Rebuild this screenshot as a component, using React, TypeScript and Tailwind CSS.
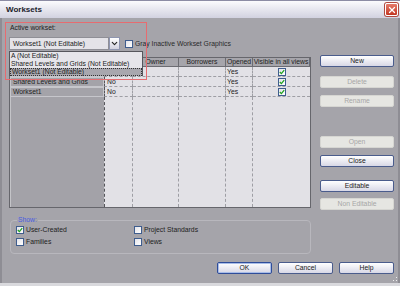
import { ChevronDown, X } from 'lucide-react';

const rows = [
  { name: '', editable: '', opened: 'Yes' },
  { name: 'Shared Levels and Grids', editable: 'No', opened: 'Yes' },
  { name: 'Workset1', editable: 'No', opened: 'Yes' },
];

const cols = 'grid grid-cols-[94px_29px_46px_47px_27px_57px]';

function Tick({ checked = false }: { checked?: boolean }) {
  return (
    <span className="w-[8px] h-[8px] bg-gradient-to-br from-[#e4e4ea] to-white border border-[#3f5d8e] flex items-center justify-center shrink-0">
      {checked && (
        <svg width="6" height="6" viewBox="0 0 6 6">
          <path d="M0.8 3 L2.4 4.6 L5.2 1.2" fill="none" stroke="#21a121" strokeWidth="1.3" />
        </svg>
      )}
    </span>
  );
}

function Btn({ label, disabled = false, primary = false }: { label: string; disabled?: boolean; primary?: boolean }) {
  return (
    <div
      className={
        disabled
          ? 'h-[12px] flex items-center justify-center rounded-[2px] bg-[#e6e6e2] border border-[#d6d6d2] text-[#a6a6a6]'
          : primary
            ? 'h-[12px] flex items-center justify-center rounded-[2px] bg-gradient-to-b from-white to-[#d8d8e6] border border-[#2f4d9a] shadow-[inset_0_0_0_1px_#a9bde8] text-[#1a1a1a]'
            : 'h-[12px] flex items-center justify-center rounded-[2px] bg-gradient-to-b from-white to-[#d8d8e6] border border-[#4a5c8c] text-[#1a1a1a]'
      }
    >
      {label}
    </div>
  );
}

export default function App() {
  return (
    <div className="w-[400px] h-[286px] bg-[#a5a4aa] flex flex-col overflow-hidden relative font-['Liberation_Sans',Arial,sans-serif] text-[6.8px] leading-[8px] text-[#222]">
      {/* Title bar */}
      <div className="h-[18px] shrink-0 flex items-center justify-between pl-[6px] pr-[2px] bg-gradient-to-b from-[#fbfbfd] to-[#d2d2e0] border-t border-[#8c8ca4]">
        <span className="font-bold text-[8px] text-[#1c1c2c]">Worksets</span>
        <div className="w-[13px] h-[13px] rounded-[2px] border border-white bg-gradient-to-b from-[#e67a6a] to-[#c23420] flex items-center justify-center shadow-[0_0_0_1px_#b04a40]">
          <X size={10} strokeWidth={3} className="text-white" />
        </div>
      </div>

      {/* Body */}
      <div className="flex-1 flex flex-col pl-[7px] pr-[4px] border-l-2 border-r-2 border-[#8e8d94]">
        <div className="mt-[6px] pl-[1px] text-[#202020]">Active workset:</div>

        <div className="mt-[5px] flex items-center h-[13px]">
          <div className="w-[100px] h-[13px] bg-[#e4e3e8] border border-[#8f8f96] flex items-center pl-[3px]">
            Workset1 (Not Editable)
          </div>
          <div className="w-[11px] h-[13px] bg-gradient-to-b from-white to-[#d2d2e0] border border-[#8f96b0] flex items-center justify-center">
            <ChevronDown size={9} strokeWidth={3} />
          </div>
          <div className="ml-[5px] flex items-center gap-[2px] text-[#2a2a2a]">
            <Tick />
            <span>Gray Inactive Workset Graphics</span>
          </div>
        </div>

        {/* Main area */}
        <div className="mt-[5px] flex items-start gap-[9px]">
          <div className="mt-[2px] w-[302px] h-[151px] border border-[#66666c] flex flex-col">
            {/* Header */}
            <div className={`${cols} h-[9px]`}>
              {['', '', 'Owner', 'Borrowers', 'Opened', 'Visible in all views'].map((h, i) => (
                <div key={i} className="border-r border-b border-[#6c6c72] bg-[#a6a5ab] flex items-center justify-center whitespace-nowrap">
                  {h}
                </div>
              ))}
            </div>
            {/* Rows */}
            {rows.map((r, i) => (
              <div key={i} className={`${cols} h-[10px]`}>
                <div className="bg-[#a4a3a9] border border-[#c6c6cb] pl-[2px] flex items-center">{r.name}</div>
                <div className="bg-[#e2e1e6] border-l border-l-[#55555a] border-r border-dashed border-[#9e9ea4] border-b flex items-center pl-[2px]">{r.editable}</div>
                <div className="bg-[#e2e1e6] border-r border-b border-dashed border-[#9e9ea4]" />
                <div className="bg-[#e2e1e6] border-r border-b border-dashed border-[#9e9ea4]" />
                <div className="bg-[#e2e1e6] border-r border-b border-dashed border-[#9e9ea4] flex items-center pl-[1px]">{r.opened}</div>
                <div className="bg-[#e2e1e6] border-b border-dashed border-[#9e9ea4] flex items-center justify-center">
                  <Tick checked />
                </div>
              </div>
            ))}
            {/* Empty area */}
            <div className={`${cols} flex-1`}>
              <div className="bg-[#a3a2a8] border-l border-[#c4c4c8]" />
              <div className="bg-[#e2e1e6] border-l border-l-[#55555a] border-r border-dashed border-[#9e9ea4]" />
              <div className="bg-[#e2e1e6] border-r border-dashed border-[#9e9ea4]" />
              <div className="bg-[#e2e1e6] border-r border-dashed border-[#9e9ea4]" />
              <div className="bg-[#e2e1e6] border-r border-dashed border-[#9e9ea4]" />
              <div className="bg-[#e2e1e6]" />
            </div>
          </div>

          <div className="w-[74px] flex flex-col">
            <Btn label="New" />
            <div className="mt-[9px]"><Btn label="Delete" disabled /></div>
            <div className="mt-[7px]"><Btn label="Rename" disabled /></div>
            <div className="mt-[29px]"><Btn label="Open" disabled /></div>
            <div className="mt-[7px]"><Btn label="Close" /></div>
            <div className="mt-[13px]"><Btn label="Editable" /></div>
            <div className="mt-[6px]"><Btn label="Non Editable" disabled /></div>
          </div>
        </div>

        {/* Show group */}
        <fieldset className="mt-[6px] ml-[1px] w-[301px] h-[38px] border border-[#b8b7bd] rounded-[4px] pl-[5px] pt-[2px]">
          <legend className="ml-[1px] px-[1px] text-[#4a5ce0]">Show:</legend>
          <div className="grid grid-cols-[118px_1fr] gap-y-[4px]">
            <div className="flex items-center gap-[2px]"><Tick checked />User-Created</div>
            <div className="flex items-center gap-[2px]"><Tick />Project Standards</div>
            <div className="flex items-center gap-[2px]"><Tick />Families</div>
            <div className="flex items-center gap-[2px]"><Tick />Views</div>
          </div>
        </fieldset>

        <div className="mt-[8px] flex justify-end gap-[6px]">
          <div className="w-[55px]"><Btn label="OK" primary /></div>
          <div className="w-[55px]"><Btn label="Cancel" /></div>
          <div className="w-[55px]"><Btn label="Help" /></div>
        </div>
      </div>

      <div className="h-[3px] shrink-0 bg-[#d9d9dd]" />

      {/* resize grip */}
      <svg className="absolute right-[2px] bottom-[4px]" width="5" height="5" viewBox="0 0 5 5">
        <rect x="3" y="0" width="1" height="1" fill="#eee" />
        <rect x="0" y="3" width="1" height="1" fill="#eee" />
        <rect x="3" y="3" width="1" height="1" fill="#eee" />
      </svg>

      {/* Open dropdown list */}
      <div className="absolute left-[9px] top-[51px] w-[134px] h-[25px] bg-[#e6e5ea] border border-[#56565c] flex flex-col whitespace-nowrap">
        <div className="h-[8px] pl-[1px] flex items-center">A (Not Editable)</div>
        <div className="h-[8px] pl-[1px] flex items-center">Shared Levels and Grids (Not Editable)</div>
        <div className="h-[8px] pl-[1px] flex items-center bg-[#a8a7ae] border border-dotted border-[#333]">Workset1 (Not Editable)</div>
      </div>

      {/* Highlight box */}
      <div className="absolute left-[5px] top-[22px] w-[142px] h-[58px] border border-[#e66c70] pointer-events-none" />
    </div>
  );
}
